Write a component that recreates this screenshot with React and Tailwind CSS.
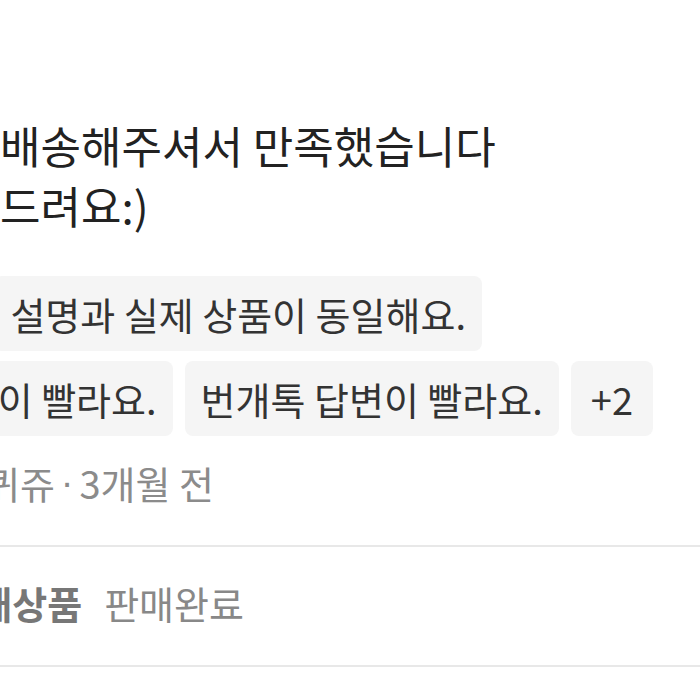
import React from 'react';

const Tag = ({ children, className = 'px-4' }) => (
  <span className={`h-[75px] shrink-0 flex items-center rounded-lg bg-[#f5f5f5] text-[#333] text-[38px] whitespace-nowrap ${className}`}>
    {children}
  </span>
);

export default function App() {
  return (
    <div className="w-[700px] h-[700px] bg-white overflow-hidden font-['Noto_Sans_CJK_KR',sans-serif]">
      {/* review body */}
      <div className="pt-[115px] text-[44px] leading-[60px] text-[#222] whitespace-nowrap">
        <p>배송해주셔서 만족했습니다</p>
        <p>드려요:)</p>
      </div>

      {/* keyword tags */}
      <div className="mt-[41px] flex flex-col gap-[10px]">
        <div className="w-[482px] flex justify-end">
          <Tag>설명과 실제 상품이 동일해요.</Tag>
        </div>
        <div className="w-[653px] flex justify-end gap-3">
          <Tag>이 빨라요.</Tag>
          <Tag>번개톡 답변이 빨라요.</Tag>
          <Tag className="px-5">+2</Tag>
        </div>
      </div>

      {/* meta */}
      <div className="mt-[22px] w-[214px] flex justify-end text-[38px] leading-[50px] text-[#8b8b8b] whitespace-nowrap">
        퀴쥬<span className="font-['Liberation_Sans',sans-serif] px-[6px]">·</span>3개월 전
      </div>

      {/* product status */}
      <div className="mt-[37px] border-y-2 border-[#e8e8e8] h-[122px] flex items-center pb-[8px]">
        <div className="w-[244px] flex justify-end items-center gap-[22px] text-[38px] whitespace-nowrap">
          <span className="font-bold text-[#777]">재상품</span>
          <span className="text-[#888]">판매완료</span>
        </div>
      </div>
    </div>
  );
}
